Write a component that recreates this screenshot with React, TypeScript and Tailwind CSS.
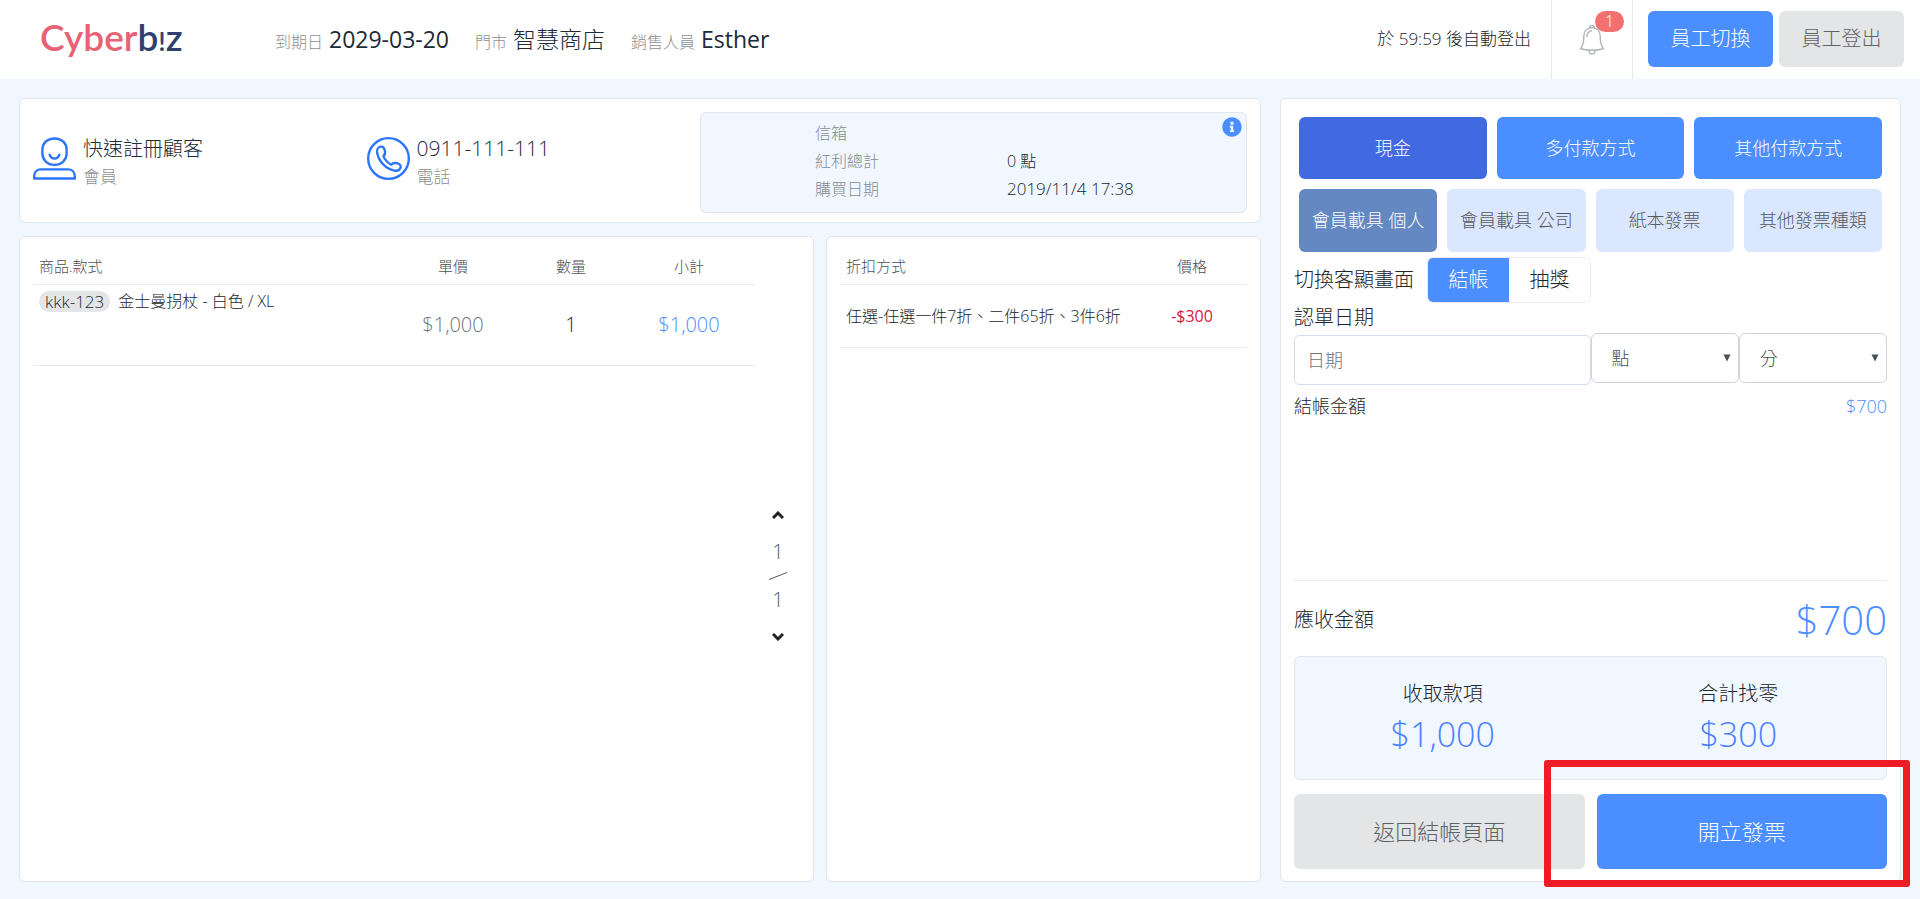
import { useState } from "react";
import type { ReactNode } from "react";
import { FaInfoCircle } from "react-icons/fa";

const payments = ["現金", "多付款方式", "其他付款方式"];
const invoices = ["會員載具 個人", "會員載具 公司", "紙本發票", "其他發票種類"];

function Logo() {
  return (
    <a
      href="#home"
      aria-label="Cyberbiz"
      className="flex items-baseline font-[Lato,sans-serif] text-[37px] leading-[42px] font-semibold"
    >
      <span className="text-[#e86275]">Cyber</span>
      <span className="text-[#2f4070]">b</span>
      <span className="text-[27px] text-[#2f4070]">!</span>
      <span className="text-[#2f4070]">z</span>
    </a>
  );
}

function UserIcon() {
  return (
    <svg width="43" height="43" viewBox="0 0 44 44" fill="none" stroke="#2b74ff" strokeWidth="2.400" strokeLinejoin="round" className="mb-2">
      <path d="M22 1.500c7.500 0 12.400 5 12.400 11.500v4c0 6.500-5 11.500-12.400 11.500S9.600 23.500 9.600 17v-4C9.600 6.500 14.500 1.500 22 1.500z" />
      <path d="M17 18c.8 2.600 2.700 4 5 4s4.200-1.400 5-4" strokeLinecap="round" />
      <path d="M1.200 42.500v-2c0-4.500 2.800-7.300 7-7.300h27.600c4.200 0 7 2.800 7 7.300v2z" />
    </svg>
  );
}

function PhoneIcon() {
  return (
    <svg width="43" height="43" viewBox="0 0 44 44" fill="none" stroke="#2b74ff" strokeWidth="2.400" strokeLinejoin="round" className="mb-2">
      <circle cx="22" cy="22" r="20.800" />
      <path d="M13.800 9.900c-2.600.500-4 3-3.400 6.200 1.700 9.200 9 16.600 17.500 18.300 3.400.600 5.900-.900 6.500-3.200.500-2.100-1.100-3.900-3.900-4.400-3.100-.600-4.300-.100-5.700 1.500-3.900-2.200-6.500-5-8-8.500 1.900-1.600 2.200-3.100 1.500-6-.700-2.800-2.400-4.300-4.500-3.900z" />
    </svg>
  );
}

function BellIcon() {
  return (
    <svg width="26" height="30" viewBox="0 0 26 30" fill="none" stroke="#b4b8bc" strokeWidth="1.500" strokeLinejoin="round" strokeLinecap="round">
      <path d="M10.500 3c0-1.600 1-2.500 2.500-2.500s2.500.900 2.500 2.500" />
      <path d="M13 2.800c5 0 8.200 3.400 8.200 8.500 0 6.500.700 9.500 3.300 12.500-7 1.800-16 1.800-23 0 2.600-3 3.300-6 3.300-12.500 0-5.100 3.200-8.500 8.200-8.500z" />
      <path d="M8 11.500c0-3.200 1.800-5.300 4.500-5.700" />
      <path d="M9.800 25.500c.300 2.300 1.500 3.600 3.200 3.600s2.900-1.300 3.200-3.600" />
    </svg>
  );
}

function HeaderField({ label, children }: { label: string; children: ReactNode }) {
  return (
    <div className="flex items-baseline gap-1.5">
      <dt className="text-[16px] text-[#8f8f8f]">{label}</dt>
      <dd className="text-[23px] leading-[32px] text-[#202a36]">{children}</dd>
    </div>
  );
}

function Contact({ icon, value, label }: { icon: ReactNode; value: ReactNode; label: string }) {
  return (
    <div className="flex w-1/2 items-center gap-[7px]">
      {icon}
      <div className="flex flex-col">
        <span className="text-[20px] leading-[28px] text-[#202a36]">{value}</span>
        <span className="text-[17px] leading-[28px] text-[#8f8f8f]">{label}</span>
      </div>
    </div>
  );
}

const card = "rounded-md border border-[#e2e5e9] bg-white";

export default function App() {
  const [payment, setPayment] = useState(0);
  const [invoice, setInvoice] = useState(0);

  return (
    <div className="flex min-h-screen flex-col bg-[#f0f7ff] font-['Open_Sans','Noto_Sans_CJK_TC',sans-serif] font-light text-[#212529]">
      <header className="flex h-[79px] items-center bg-white pb-0.5">
        <div className="w-[275px] shrink-0 pl-10">
          <Logo />
        </div>
        <dl className="flex items-baseline gap-[26px]">
          <HeaderField label="到期日">
            <span className="font-normal">2029-03-20</span>
          </HeaderField>
          <HeaderField label="門市">智慧商店</HeaderField>
          <HeaderField label="銷售人員">
            <span className="font-normal">Esther</span>
          </HeaderField>
        </dl>
        <p className="mr-5 ml-auto text-[17px]">於 59:59 後自動登出</p>
        <button
          type="button"
          aria-label="通知"
          className="flex h-[79px] w-[82px] items-center justify-center self-start border-x border-[#e9ebed]"
        >
          <span className="relative">
            <BellIcon />
            <span className="absolute -top-3.5 left-4 h-[21px] w-[29px] rounded-full bg-[#f27070] text-center text-[16px] leading-[21px] text-white">
              1
            </span>
          </span>
        </button>
        <div className="flex gap-1.5 pr-4 pl-[15px]">
          <button type="button" className="h-14 w-[125px] rounded-md bg-[#4b8eff] text-[20px] text-white">
            員工切換
          </button>
          <button type="button" className="h-14 w-[125px] rounded-md bg-[#e4e5e7] text-[20px] text-[#5f6163]">
            員工登出
          </button>
        </div>
      </header>

      <main className="grid flex-1 grid-cols-[2fr_1fr] gap-[19px] px-[19px] pt-[19px] pb-[17px]">
        <div className="flex min-w-0 flex-col gap-[13px]">
          <section className={`grid grid-cols-[667fr_547fr] items-center px-[13px] pt-[13px] pb-[9px] ${card}`}>
            <div className="flex">
              <Contact icon={<UserIcon />} value="快速註冊顧客" label="會員" />
              <Contact
                icon={<PhoneIcon />}
                value={<span className="text-[21px]">0911-111-111</span>}
                label="電話"
              />
            </div>
            <div className="relative rounded-md border border-[#e2e5e9] bg-[#f0f7ff] pt-1.5 pb-[9px]">
              <dl className="grid grid-cols-[192px_1fr] pl-[114px] text-[16px] leading-[28px]">
                <dt className="text-[#888c90]">信箱</dt>
                <dd />
                <dt className="text-[#888c90]">紅利總計</dt>
                <dd>0 點</dd>
                <dt className="text-[#888c90]">購買日期</dt>
                <dd className="text-[17px]">2019/11/4 17:38</dd>
              </dl>
              <button type="button" aria-label="詳細資料" className="absolute top-1 right-1">
                <FaInfoCircle className="size-5 text-[#4b8eff]" />
              </button>
            </div>
          </section>

          <div className="grid flex-1 grid-cols-[795fr_435fr] gap-3">
            <section className={`flex pt-3 pl-[13px] ${card}`}>
              <table className="h-fit flex-1 table-fixed">
                <colgroup>
                  <col />
                  <col className="w-[118px]" />
                  <col className="w-[118px]" />
                  <col className="w-[125px]" />
                </colgroup>
                <thead>
                  <tr className="h-[35px] border-b border-[#e9ebed] text-[15px] text-[#4d4f52]">
                    <th className="pl-1.5 text-left font-light">商品.款式</th>
                    <th className="font-light">單價</th>
                    <th className="font-light">數量</th>
                    <th className="pr-[7px] font-light">小計</th>
                  </tr>
                </thead>
                <tbody>
                  <tr className="h-[81px] border-b border-[#e9ebed] text-center text-[20px]">
                    <td className="pt-1.5 pl-1.5 text-left align-top text-[16px]">
                      <div className="flex items-center gap-2 leading-[21px]">
                        <span className="rounded-full bg-[#e4e5e7] px-1.5 text-[17px]">kkk-123</span>
                        <span>金士曼拐杖 - 白色 / XL</span>
                      </div>
                    </td>
                    <td className="text-[#6c757d]">$1,000</td>
                    <td>1</td>
                    <td className="pr-[7px] text-[#4b8eff]">$1,000</td>
                  </tr>
                </tbody>
              </table>
              <nav
                aria-label="分頁"
                className="flex w-[58px] flex-col items-center justify-center gap-1.5 pt-[22px] pr-3 text-[20px] leading-[28px] text-[#55585c]"
              >
                <button type="button" aria-label="上一頁" className="px-2 py-[13px]">
                  <svg width="12" height="8" viewBox="0 0 12 8" fill="none" stroke="#212529" strokeWidth="3">
                    <path d="M1 7l5-5 5 5" />
                  </svg>
                </button>
                <span>1</span>
                <svg width="20" height="8" viewBox="0 0 20 8" stroke="#55585c" strokeWidth="1">
                  <path d="M1 7.500L19 .500" />
                </svg>
                <span>1</span>
                <button type="button" aria-label="下一頁" className="px-2 py-[13px]">
                  <svg width="12" height="8" viewBox="0 0 12 8" fill="none" stroke="#212529" strokeWidth="3">
                    <path d="M1 1l5 5 5-5" />
                  </svg>
                </button>
              </nav>
            </section>

            <section className={`px-[13px] pt-3 ${card}`}>
              <table className="w-full table-fixed">
                <colgroup>
                  <col />
                  <col className="w-[110px]" />
                </colgroup>
                <thead>
                  <tr className="h-[35px] border-b border-[#e9ebed] text-[15px] text-[#4d4f52]">
                    <th className="pl-1.5 text-left font-light">折扣方式</th>
                    <th className="font-light">價格</th>
                  </tr>
                </thead>
                <tbody>
                  <tr className="h-[63px] border-b border-[#e9ebed] text-[16px]">
                    <td className="pl-1.5">任選-任選一件7折、二件65折、3件6折</td>
                    <td className="text-center font-normal text-[#dc143c]">-$300</td>
                  </tr>
                </tbody>
              </table>
            </section>
          </div>
        </div>

        <aside className={`relative flex min-w-0 flex-col px-[13px] pt-[18px] pb-3 ${card}`}>
          <div className="flex flex-col gap-2.5 px-[5px]">
            <div className="grid grid-cols-3 gap-2.5">
              {payments.map((name, i) => (
                <button
                  key={name}
                  type="button"
                  aria-pressed={i === payment}
                  onClick={() => setPayment(i)}
                  className={`h-[62px] rounded-md text-[18px] text-white ${i === payment ? "bg-[#4169e1]" : "bg-[#4b8eff]"}`}
                >
                  {name}
                </button>
              ))}
            </div>
            <div className="grid grid-cols-4 gap-2.5">
              {invoices.map((name, i) => (
                <button
                  key={name}
                  type="button"
                  aria-pressed={i === invoice}
                  onClick={() => setInvoice(i)}
                  className={`h-[63px] rounded-md text-[18px] ${i === invoice ? "bg-[#6488c2] text-white" : "bg-[#dbe7ff] text-[#55585c]"}`}
                >
                  {name}
                </button>
              ))}
            </div>
          </div>

          <div className="mt-[5px] flex items-center gap-[13px] text-[20px]">
            <span>切換客顯畫面</span>
            <div className="flex h-[46px] overflow-hidden rounded-md border border-[#e9ebed]">
              <button type="button" className="w-[81px] bg-[#4b8eff] text-white">
                結帳
              </button>
              <button type="button" className="w-[81px] bg-white">
                抽獎
              </button>
            </div>
          </div>

          <label htmlFor="date" className="text-[20px] leading-[30px]">
            認單日期
          </label>
          <div className="flex items-start">
            <input
              id="date"
              type="text"
              placeholder="日期"
              className="mt-0.5 h-[50px] w-1/2 rounded-md border border-[#d3def2] px-3 text-[18px] placeholder:text-[#6c757d]"
            />
            {["點", "分"].map((unit) => (
              <div key={unit} className="relative w-1/4">
                <select
                  aria-label={unit}
                  className="h-[50px] w-full appearance-none rounded-md border border-[#ced4da] bg-white pl-5 text-[18px] text-[#495057]"
                >
                  <option>{unit}</option>
                </select>
                <svg width="8" height="8" viewBox="0 0 8 8" className="pointer-events-none absolute top-[21px] right-2" fill="#495057">
                  <path d="M.5.500h7L4 7.500z" />
                </svg>
              </div>
            ))}
          </div>

          <div className="mt-2 flex items-center justify-between text-[18px] leading-[26px]">
            <span>結帳金額</span>
            <span className="text-[#4b8eff]">$700</span>
          </div>

          <div className="mt-auto flex h-[76px] items-center justify-between border-t border-[#e9ebed] pt-0.5">
            <span className="text-[20px]">應收金額</span>
            <span className="text-[40px] text-[#4b8eff]">$700</span>
          </div>

          <dl className="grid h-[124px] grid-cols-2 items-center rounded-md border border-[#e2e5e9] bg-[#f0f7ff] pt-0.5 text-center">
            <div>
              <dt className="text-[20px] leading-[30px]">收取款項</dt>
              <dd className="text-[34px] leading-[50px] text-[#4b7fff]">$1,000</dd>
            </div>
            <div>
              <dt className="text-[20px] leading-[30px]">合計找零</dt>
              <dd className="text-[34px] leading-[50px] text-[#4b7fff]">$300</dd>
            </div>
          </dl>

          <div className="mt-[14px] grid grid-cols-2 gap-3">
            <button type="button" className="h-[75px] rounded-md bg-[#e4e5e7] text-[22px] text-[#5f6163]">
              返回結帳頁面
            </button>
            <button type="button" className="h-[75px] rounded-md bg-[#4b8eff] text-[22px] text-white">
              開立發票
            </button>
          </div>
          <div className="pointer-events-none absolute -right-[10px] -bottom-1.5 h-[127px] w-[366px] rounded-[3px] border-[7px] border-[#ee1c25]" />
        </aside>
      </main>
    </div>
  );
}
